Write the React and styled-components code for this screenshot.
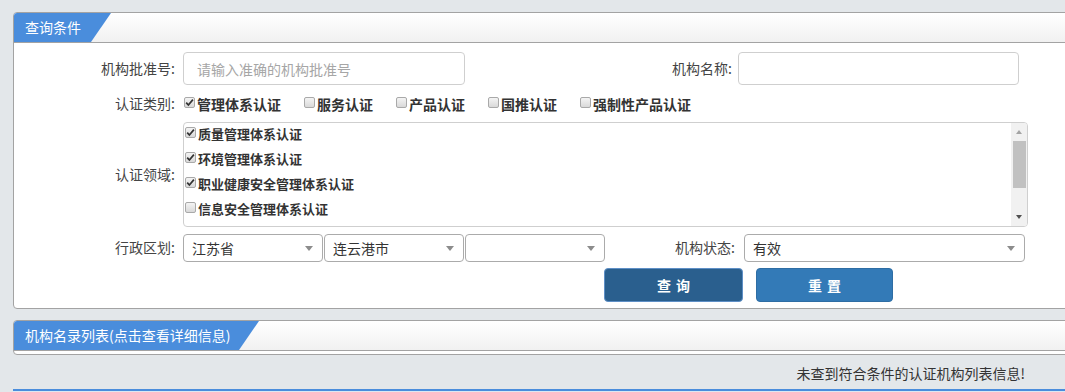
import React from "react";
import styled, { createGlobalStyle } from "styled-components";

const Global = createGlobalStyle`
  html, body { margin: 0; padding: 0; }
  body {
    background: #e3e7ea;
    font-family: "Noto Sans CJK SC", "Noto Sans", sans-serif;
    font-size: 14px;
    color: #333;
    overflow: hidden;
    width: 1065px;
    height: 392px;
  }
  * { box-sizing: border-box; }
`;

const Page = styled.div`
  padding-top: 12px;
  position: relative;
  height: 392px;
`;

const Panel = styled.section`
  margin-left: 13px;
  width: 1070px;
  background: #fff;
  border: 1px solid #a3a3a3;
  border-radius: 4px;
  overflow: hidden;
  margin-bottom: ${(p) => p.$mb || 0}px;
`;

const Header = styled.div`
  height: 30px;
  background: linear-gradient(#ffffff, #f1f1f1);
  border-bottom: 1px solid #a3a3a3;
  display: flex;
`;

const Tab = styled.div`
  width: ${(p) => p.$w}px;
  height: 29px;
  background: #4a8ddc;
  color: #fff;
  font-size: 14px;
  line-height: 29px;
  padding-left: 11px;
  clip-path: polygon(0 0, 100% 0, calc(100% - ${(p) => p.$slant}px) 100%, 0 100%);
  white-space: nowrap;
`;

const Body = styled.div`
  padding: 9px 0 6px 0;
`;

const PanelFoot = styled.div`
  height: 3px;
`;

const Row = styled.div`
  display: flex;
  align-items: center;
  height: ${(p) => p.$h}px;
  margin-top: ${(p) => p.$mt || 0}px;
`;

const Label = styled.label`
  width: ${(p) => p.$w}px;
  text-align: right;
  color: #444;
  font-size: 14px;
  padding-right: ${(p) => p.$pr ?? 8}px;
  flex: none;
  white-space: nowrap;
  position: relative;
  top: -1px;
`;

const Input = styled.input`
  width: ${(p) => p.$w}px;
  height: 33px;
  border: 1px solid #cfcfcf;
  border-radius: 4px;
  padding: 0 13px;
  font-family: inherit;
  font-size: 14px;
  color: #333;
  outline: none;
  flex: none;
  &::placeholder { color: #a6a6a6; }
`;

const CheckGroup = styled.div`
  display: flex;
  align-items: center;
`;

const CheckItem = styled.span`
  display: inline-flex;
  align-items: center;
  font-weight: bold;
  font-size: ${(p) => p.$fs || 14}px;
  color: #333;
  margin-right: ${(p) => p.$mr || 0}px;
  height: ${(p) => p.$h || 20}px;
  white-space: nowrap;
`;

const Box = styled.span`
  width: 11px;
  height: 11px;
  margin: 0 2px 0 1px;
  border: 1px solid #a9a9a9;
  border-radius: 2px;
  background: linear-gradient(#f4f4f4, #d9d9d9);
  display: inline-flex;
  align-items: center;
  justify-content: center;
  flex: none;
  position: relative;
  top: -1px;
`;

const Check = ({ on }) => (
  <Box>
    {on && (
      <svg width="9" height="9" viewBox="0 0 9 9">
        <path d="M1.2 4.6 L3.4 7 L7.9 1.6" fill="none" stroke="#333" strokeWidth="1.7" />
      </svg>
    )}
  </Box>
);

const ListBox = styled.div`
  width: 845px;
  height: 105px;
  border: 1px solid #cfcfcf;
  border-radius: 4px;
  display: flex;
  overflow: hidden;
  flex: none;
`;

const ListItems = styled.div`
  flex: 1;
  margin-top: -2px;
`;

const ListItem = styled.div`
  height: 25px;
  display: flex;
  align-items: center;
`;

const Scroll = styled.div`
  width: 16px;
  background: #f1f1f1;
  display: flex;
  flex-direction: column;
  align-items: center;
  padding: 2px 0;
`;

const Arrow = styled.span`
  width: 0;
  height: 0;
  border-left: 3.5px solid transparent;
  border-right: 3.5px solid transparent;
  ${(p) => (p.$up ? "border-bottom: 4px solid #a3a3a3;" : "border-top: 4px solid #505050;")}
  margin: 5px 0;
`;

const Thumb = styled.div`
  width: 13px;
  height: 47px;
  background: #c1c1c1;
  margin-top: 2px;
  flex: none;
`;

const Spacer = styled.div`
  flex: 1;
`;

const Select = styled.div`
  width: ${(p) => p.$w}px;
  height: 28px;
  border: 1px solid #ababab;
  border-radius: 4px;
  margin-right: ${(p) => p.$mr || 0}px;
  display: flex;
  align-items: center;
  padding: 0 9px 0 8px;
  font-size: 14px;
  color: #333;
  flex: none;
  background: #fff;
`;

const SelText = styled.span`
  flex: 1;
  white-space: nowrap;
`;

const Caret = styled.span`
  width: 0;
  height: 0;
  border-left: 4px solid transparent;
  border-right: 4px solid transparent;
  border-top: 5px solid #8c8c8c;
`;

const Buttons = styled.div`
  display: flex;
  margin-top: 6px;
  padding-left: 590px;
  gap: 13px;
`;

const Button = styled.button`
  width: ${(p) => p.$w}px;
  height: 34px;
  border-radius: 4px;
  border: 1px solid ${(p) => (p.$dark ? "#5e8fc6" : "#2e6da4")};
  background: ${(p) => (p.$dark ? "#2a5f8e" : "#337ab7")};
  color: #fff;
  font-family: inherit;
  font-size: 14px;
  font-weight: bold;
  letter-spacing: 5px;
  padding: 0 0 0 5px;
  cursor: pointer;
`;

const Message = styled.div`
  text-align: right;
  padding-right: 40px;
  margin-top: 8px;
  font-size: 14px;
  color: #333;
`;

const BottomLine = styled.div`
  position: absolute;
  left: 13px;
  right: 0;
  top: 389px;
  height: 3px;
  border-top: 2px solid #4a8ddc;
  background: #dde7f2;
`;

const Sel = ({ w, mr, text }) => (
  <Select $w={w} $mr={mr}>
    <SelText>{text}</SelText>
    <Caret />
  </Select>
);

export default function App() {
  const cats = [
    ["管理体系认证", true],
    ["服务认证", false],
    ["产品认证", false],
    ["国推认证", false],
    ["强制性产品认证", false],
  ];
  const fields = [
    ["质量管理体系认证", true],
    ["环境管理体系认证", true],
    ["职业健康安全管理体系认证", true],
    ["信息安全管理体系认证", false],
  ];
  return (
    <Page>
      <Global />
      <Panel $mb={11}>
        <Header>
          <Tab $w={97} $slant={20}>查询条件</Tab>
        </Header>
        <Body>
          <Row $h={33}>
            <Label $w={169}>机构批准号:</Label>
            <Input $w={282} placeholder="请输入准确的机构批准号" />
            <Label $w={273} $pr={6}>机构名称:</Label>
            <Input $w={281} />
          </Row>
          <Row $h={37}>
            <Label $w={169}>认证类别:</Label>
            <CheckGroup>
              {cats.map(([t, on], i) => (
                <CheckItem key={t} $mr={i < 4 ? 22 : 0}>
                  <Check on={on} />
                  {t}
                </CheckItem>
              ))}
            </CheckGroup>
          </Row>
          <Row $h={105}>
            <Label $w={169}>认证领域:</Label>
            <ListBox>
              <ListItems>
                {fields.map(([t, on]) => (
                  <ListItem key={t}>
                    <CheckItem $fs={13}>
                      <Check on={on} />
                      {t}
                    </CheckItem>
                  </ListItem>
                ))}
              </ListItems>
              <Scroll>
                <Arrow $up />
                <Thumb />
                <Spacer />
                <Arrow />
              </Scroll>
            </ListBox>
          </Row>
          <Row $h={28} $mt={7}>
            <Label $w={169}>行政区划:</Label>
            <Sel w={140} mr={1} text="江苏省" />
            <Sel w={140} mr={1} text="连云港市" />
            <Sel w={140} text="" />
            <Label $w={139} $pr={9}>机构状态:</Label>
            <Sel w={281} text="有效" />
          </Row>
          <Buttons>
            <Button $w={139} $dark>查询</Button>
            <Button $w={137}>重置</Button>
          </Buttons>
        </Body>
      </Panel>
      <Panel>
        <Header>
          <Tab $w={245} $slant={20}>机构名录列表(点击查看详细信息)</Tab>
        </Header>
        <PanelFoot />
      </Panel>
      <Message>未查到符合条件的认证机构列表信息!</Message>
      <BottomLine />
    </Page>
  );
}
